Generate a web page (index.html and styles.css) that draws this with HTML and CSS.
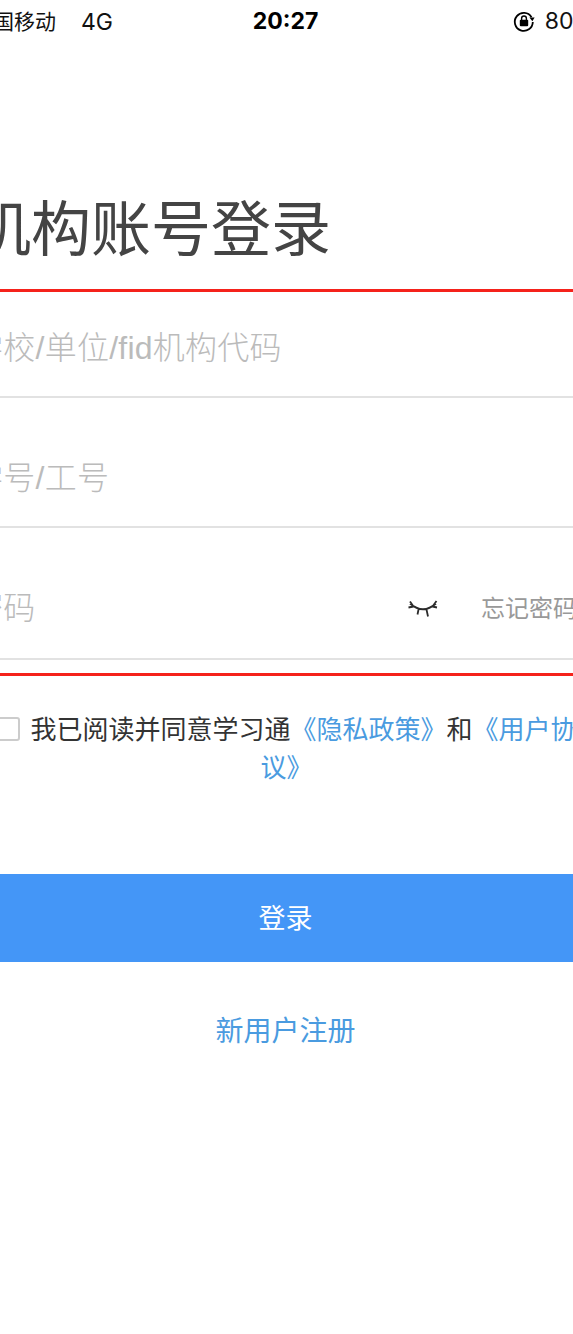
FILE: index.html
```html
<!DOCTYPE html>
<html lang="zh-CN">

<head>
    <meta charset="UTF-8">
    <meta name="viewport" content="width=device-width, initial-scale=1.0">
    <title>机构账号登录</title>
    <link rel="stylesheet" href="styles.css">
</head>

<body>
    <div id="wrapper">
        <div class="status-bar">
            <div class="status-left">
                <span class="carrier">中国移动</span>
                <span class="network">4G</span>
            </div>
            <div class="status-time">20:27</div>
            <div class="status-right">
                <svg class="lock-icon" width="24" height="24" viewBox="0 0 24 24">
                    <path d="M19.5 8.2A9 9 0 1 0 20.8 13" fill="none" stroke="#000" stroke-width="1.8"/>
                    <path d="M17.4 8.6l5.2 0-2.2 3.6z" fill="#000"/>
                    <rect x="7.8" y="10.8" width="8.4" height="6.4" rx="1" fill="#000"/>
                    <path d="M9.6 11V9.4a2.4 2.4 0 0 1 4.8 0V11" fill="none" stroke="#000" stroke-width="1.4"/>
                </svg>
                <span>80%</span>
            </div>
        </div>

        <h1 class="title">机构账号登录</h1>

        <form class="login-form">
            <div class="field">
                <input type="text" placeholder="学校/单位/fid机构代码">
            </div>
            <div class="field">
                <input type="text" placeholder="学号/工号">
            </div>
            <div class="field field-password">
                <input type="password" placeholder="密码">
                <svg class="eye-icon" width="32" height="20" viewBox="0 0 32 20">
                    <path d="M3 4.5Q16 16 29 4.5M3 2.5L6.5 7.5M1.5 8.5L6.5 7.5M11.5 10.5L10.5 15.5M19.5 10.5L21 17.5M29.5 2L25.5 7.5M30 8.5L25.5 7.5" fill="none" stroke="#2b2b2b" stroke-width="1.8"/>
                </svg>
                <a class="forgot" href="#">忘记密码</a>
            </div>
        </form>

        <p class="agreement">
            <span class="checkbox"></span>我已阅读并同意学习通<a href="#">《隐私政策》</a>和<a href="#">《用户协议》</a>
        </p>

        <button class="btn-login" type="button">登录</button>
        <a class="register" href="#">新用户注册</a>
    </div>
</body>

</html>
```

FILE: styles.css
```css
* {
    box-sizing: border-box;
}

html,
body {
    margin: 0;
    height: 100%;
    overflow: hidden;
    background-color: #fff;
}

body {
    font-family: "Liberation Sans", "Noto Sans CJK SC", sans-serif;
}

#wrapper {
    width: 651px;
    margin-left: -40px;
}

.status-bar {
    display: grid;
    grid-template-columns: 1fr auto 1fr;
    align-items: center;
    height: 42px;
    padding: 0 12px;
    font-family: Inter, "Noto Sans CJK SC", sans-serif;
    font-size: 21px;
    line-height: 28px;
    color: #111;
}

.status-left {
    display: flex;
    align-items: center;
    gap: 25px;
}

.carrier {
    padding-top: 1px;
}

.network {
    font-size: 23px;
    padding-top: 1px;
}

.status-time {
    font-size: 23px;
    font-weight: 700;
    color: #000;
}

.status-right {
    display: flex;
    justify-content: flex-end;
    align-items: center;
    gap: 9px;
    padding-right: 3px;
    font-size: 23px;
}

.title {
    margin: 0;
    padding: 149px 0 18px 11px;
    font-size: 60px;
    line-height: 80px;
    font-weight: 400;
    color: #444;
}

.login-form {
    border-top: 3px solid #f5221b;
    border-bottom: 3px solid #f5221b;
    padding: 4px 0 13px;
}

.field {
    display: flex;
    align-items: center;
    height: 102px;
    margin-top: 28px;
    padding: 0 34px 0 11px;
    border-bottom: 2px solid #e2e2e2;
}

.field:first-child {
    margin-top: 0;
}

.field-password {
    margin-top: 30px;
}

.field input {
    flex: 1;
    min-width: 0;
    height: 100%;
    padding: 5px 0 0;
    border: none;
    outline: none;
    background: none;
    font-family: inherit;
    font-size: 32px;
    font-weight: 300;
    letter-spacing: 0.25px;
}

.field-password input {
    padding-top: 0;
}

.field input::placeholder {
    color: #bbb;
}

.eye-icon {
    flex: none;
    margin: 2px 42px 0 0;
}

.forgot {
    flex: none;
    padding-bottom: 4px;
    font-size: 24px;
    color: #999;
    text-decoration: none;
}

.agreement {
    margin: 35px 0 0;
    padding: 0 30px 0 32px;
    font-size: 26px;
    line-height: 38px;
    text-align: center;
    color: #333;
}

.agreement a,
.register {
    color: #4a9be0;
    text-decoration: none;
}

.checkbox {
    display: inline-block;
    width: 24px;
    height: 24px;
    margin-right: 10px;
    border: 2px solid #ccc;
    border-radius: 3px;
    vertical-align: -2px;
}

.btn-login {
    display: block;
    width: 100%;
    height: 88px;
    margin-top: 87px;
    padding: 0 0 4px;
    border: none;
    background-color: #4496f7;
    color: #fff;
    font-family: inherit;
    font-size: 27px;
}

.register {
    display: block;
    margin-top: 50px;
    font-size: 28px;
    line-height: 40px;
    text-align: center;
}
```
